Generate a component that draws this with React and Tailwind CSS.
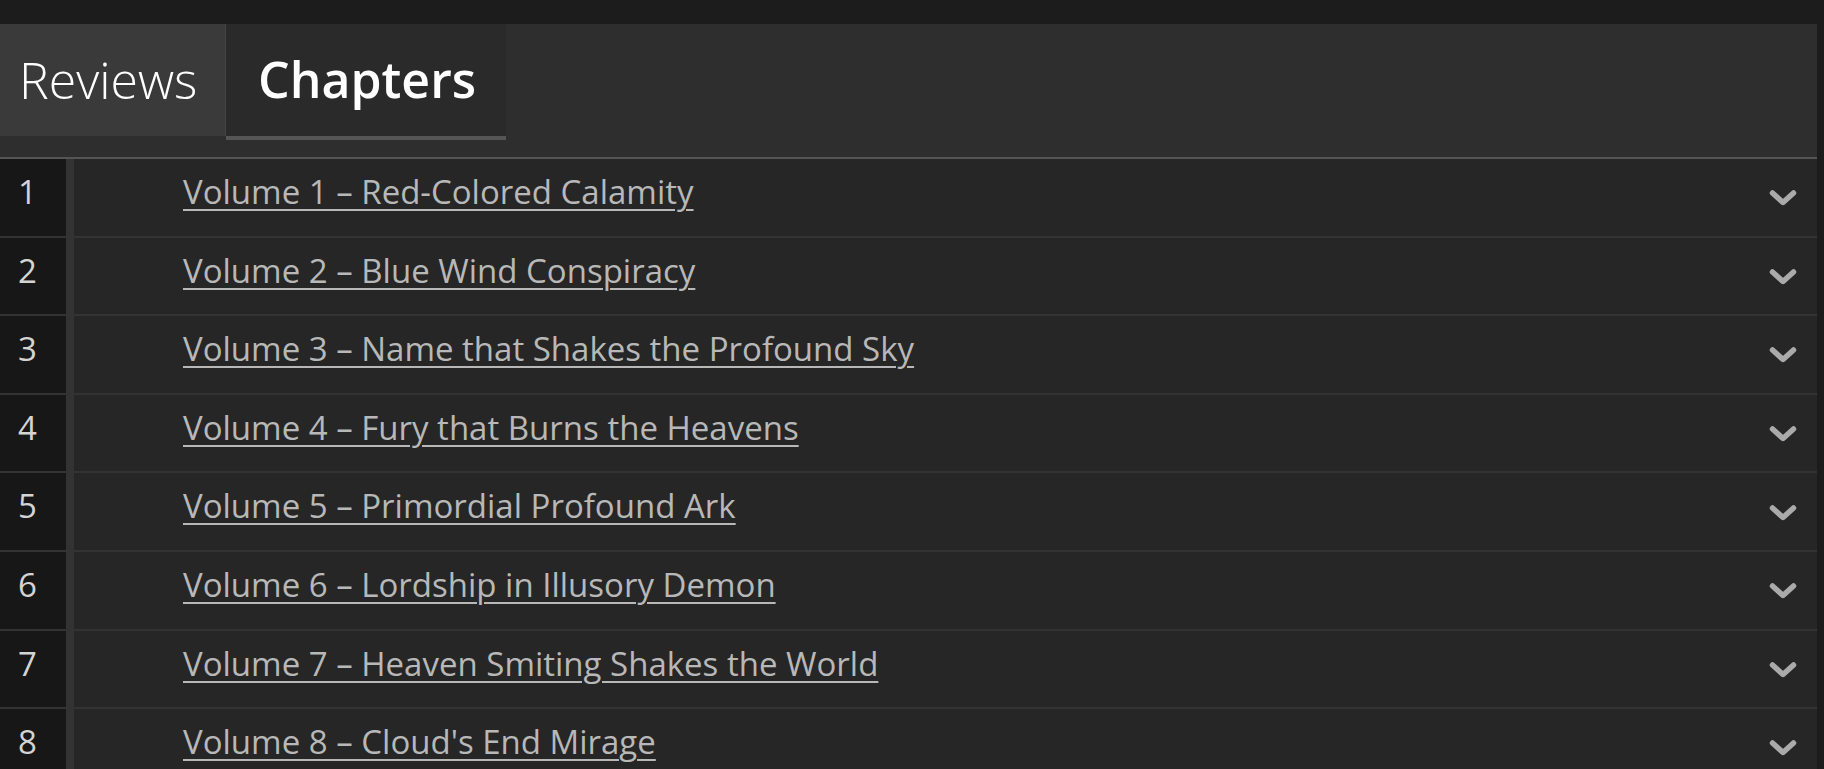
import React from "react";

const volumes = [
  "Volume 1 – Red-Colored Calamity",
  "Volume 2 – Blue Wind Conspiracy",
  "Volume 3 – Name that Shakes the Profound Sky",
  "Volume 4 – Fury that Burns the Heavens",
  "Volume 5 – Primordial Profound Ark",
  "Volume 6 – Lordship in Illusory Demon",
  "Volume 7 – Heaven Smiting Shakes the World",
  "Volume 8 – Cloud's End Mirage",
];

function Chevron() {
  return (
    <svg width="30" height="20" viewBox="0 0 30 20" fill="none">
      <path d="M4.5 5 L15 14.5 L25.5 5" stroke="#aaaaaa" strokeWidth="5.5" strokeLinecap="round" strokeLinejoin="round" />
    </svg>
  );
}

export default function App() {
  return (
    <div className="min-h-screen bg-[#1c1c1c] pt-[24px] pr-[7px] font-['Open_Sans',sans-serif] overflow-hidden h-[769px]">
      <div className="bg-[#2e2e2e]">
        <div className="h-[135px] flex items-start border-b-2 border-[#555]">
          <div className="w-[226px] h-[112px] bg-[#3a3a3a] border-r border-[#444] flex items-center pl-[19px] text-[50px] font-light text-white">
            Reviews
          </div>
          <div className="w-[280px] h-[116px] bg-[#2a2a2a] border-b-4 border-[#555] flex items-center pl-[32px] pb-[2px] text-[50px] font-semibold text-white">
            Chapters
          </div>
        </div>
        {volumes.map((v, i) => (
          <div key={i} className="flex h-[78.6px] border-b-2 border-[#333] bg-[#262626]">
            <div className="w-[66px] bg-[#171717] pl-[18px] pt-[8px] text-[33px] text-[#d4d4d4]">{i + 1}</div>
            <div className="w-[8px] bg-[#333]"></div>
            <div className="flex-1 flex items-start justify-between pl-[109px] pr-[19px]">
              <a href="#" className="pt-[8px] text-[33px] text-[#b8b8b8] underline decoration-2 underline-offset-[5px]">{v}</a>
              <div className="self-center pt-[2px]"><Chevron /></div>
            </div>
          </div>
        ))}
      </div>
    </div>
  );
}
